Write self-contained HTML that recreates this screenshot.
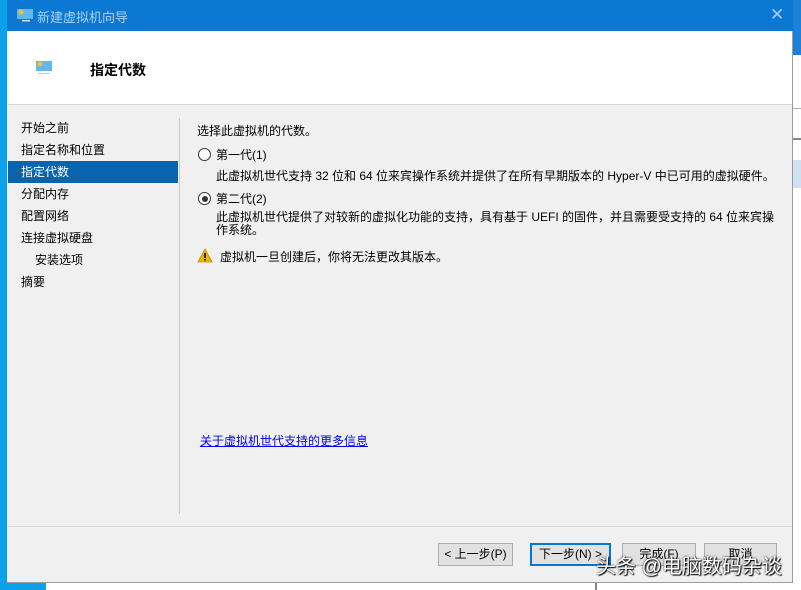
<!DOCTYPE html>
<html><head><meta charset="utf-8"><style>
*{margin:0;padding:0;box-sizing:border-box}
body{width:801px;height:590px;overflow:hidden;background:#fff;position:relative;font-family:"Liberation Sans","Microsoft YaHei","Noto Sans CJK SC",sans-serif;font-size:12px;color:#000}
.a{position:absolute}
.nav div{height:22px;line-height:22px;padding-left:13px;font-size:12px}
.btn{position:absolute;top:543px;height:23px;width:75px;border:1px solid #adadad;background:#e1e1e1;font-size:12px;text-align:center;line-height:21px}
.t{font-size:12px;white-space:nowrap}
</style></head><body>
<div class="a" style="left:0;top:0;width:7px;height:590px;background:#0aa1ea"></div>
<div class="a" style="left:7px;top:582px;width:39px;height:8px;background:#0aa1ea"></div>
<div class="a" style="left:793px;top:0;width:8px;height:55px;background:#1b80d6"></div>
<div class="a" style="left:793px;top:108px;width:8px;height:1px;background:#aaa"></div>
<div class="a" style="left:793px;top:138px;width:8px;height:2px;background:#888"></div>
<div class="a" style="left:793px;top:160px;width:8px;height:28px;background:#cfe0f0"></div>
<div class="a" style="left:7px;top:0;width:786px;height:583px;background:#f0f0f0;border-bottom:1px solid #9a9a9a;border-right:1px solid #9a9a9a"></div>
<div class="a" style="left:7px;top:0;width:786px;height:31px;background:#0b78d4"></div>
<svg class="a" style="left:16px;top:8px" width="18" height="14"><rect x="1" y="1" width="16" height="10" fill="#5fb8f0"/><circle cx="5" cy="4" r="2.5" fill="#f4c430"/><rect x="6" y="12" width="8" height="1.5" fill="#ddd"/></svg>
<div class="a t" style="left:37px;top:7px;color:#a9cff0;font-size:13px">新建虚拟机向导</div>
<div class="a" style="left:770px;top:5px;color:#a9cff0;font-size:17px">✕</div>
<div class="a" style="left:8px;top:31px;width:784px;height:74px;background:#fff;border-bottom:1px solid #d5d5d5"></div>
<svg class="a" style="left:35px;top:60px" width="18" height="15"><rect x="1" y="1" width="16" height="10" fill="#5fb8f0"/><circle cx="5" cy="4" r="2.5" fill="#f4c430"/><rect x="3" y="13" width="12" height="1" fill="#ccc"/></svg>
<div class="a t" style="left:90px;top:60px;font-size:14px;font-weight:bold">指定代数</div>
<div class="a nav" style="left:8px;top:117px;width:170px">
<div>开始之前</div><div>指定名称和位置</div><div style="background:#0a64ad;color:#fff">指定代数</div><div>分配内存</div><div>配置网络</div><div>连接虚拟硬盘</div><div style="padding-left:27px">安装选项</div><div>摘要</div></div>
<div class="a" style="left:179px;top:118px;width:1px;height:396px;background:#c8c8c8"></div>
<div class="a" style="left:8px;top:526px;width:784px;height:1px;background:#d5d5d5"></div>
<div class="a t" style="left:197px;top:122px">选择此虚拟机的代数。</div>
<div class="a" style="left:198px;top:148px;width:13px;height:13px;border:1px solid #333;border-radius:50%;background:#fff"></div>
<div class="a t" style="left:216px;top:146px">第一代(1)</div>
<div class="a t" style="left:216px;top:167px">此虚拟机世代支持 32 位和 64 位来宾操作系统并提供了在所有早期版本的 Hyper-V 中已可用的虚拟硬件。</div>
<div class="a" style="left:198px;top:192px;width:13px;height:13px;border:1px solid #333;border-radius:50%;background:#fff"><div style="margin:2.5px;width:6px;height:6px;border-radius:50%;background:#333"></div></div>
<div class="a t" style="left:216px;top:190px">第二代(2)</div>
<div class="a" style="left:216px;top:211px;width:560px;line-height:13px">此虚拟机世代提供了对较新的虚拟化功能的支持，具有基于 UEFI 的固件，并且需要受支持的 64 位来宾操作系统。</div>
<svg class="a" style="left:197px;top:248px" width="16" height="15"><path d="M8 1 L15 14 L1 14 Z" fill="#f0b400" stroke="#c08a00" stroke-width="0.8"/><rect x="7.2" y="5" width="1.6" height="5" fill="#000"/><rect x="7.2" y="11" width="1.6" height="1.6" fill="#000"/></svg>
<div class="a t" style="left:220px;top:248px">虚拟机一旦创建后，你将无法更改其版本。</div>
<div class="a t" style="left:200px;top:432px;color:#0000ee;text-decoration:underline">关于虚拟机世代支持的更多信息</div>
<div class="btn" style="left:438px">&lt; 上一步(P)</div>
<div class="btn" style="left:530px;width:81px;border:2px solid #0078d7;line-height:19px">下一步(N) &gt;</div>
<div class="btn" style="left:622px;width:74px">完成(F)</div>
<div class="btn" style="left:704px;width:73px">取消</div>
<div class="a t" style="left:596px;top:550px;font-size:20px;color:#fff;text-shadow:0 0 2px #000,1px 1px 1px #000">头条 @电脑数码杂谈</div>
<div class="a" style="left:595px;top:583px;width:2px;height:7px;background:#888"></div>
</body></html>
